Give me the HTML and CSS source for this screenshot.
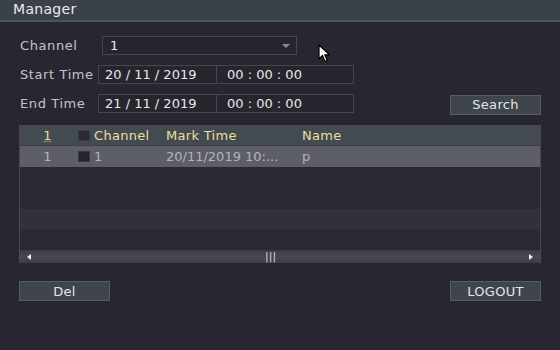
FILE: index.html
```html
<!DOCTYPE html>
<html lang="en">
<head>
  <meta charset="UTF-8" />
  <title>Manager</title>
  <link rel="stylesheet" href="styles.css">
</head>
<body>
  <header class="titlebar">Manager</header>

  <main class="panel">
    <div class="form-row">
      <label class="label">Channel</label>
      <div class="select">
        <span>1</span>
        <span class="caret"></span>
      </div>
    </div>

    <div class="form-row">
      <label class="label">Start Time</label>
      <div class="field date">20 / 11 / 2019</div>
      <div class="field time">00 : 00 : 00</div>
    </div>

    <div class="form-row">
      <label class="label">End Time</label>
      <div class="field date">21 / 11 / 2019</div>
      <div class="field time">00 : 00 : 00</div>
      <button class="btn push-right">Search</button>
    </div>

    <section class="table">
      <div class="row head">
        <span class="c-no"><u>1</u></span>
        <span class="c-box"><i class="check"></i></span>
        <span class="c-chan">Channel</span>
        <span class="c-time">Mark Time</span>
        <span class="c-name">Name</span>
      </div>
      <div class="row selected">
        <span class="c-no">1</span>
        <span class="c-box"><i class="check"></i></span>
        <span class="c-chan">1</span>
        <span class="c-time">20/11/2019 10:...</span>
        <span class="c-name">p</span>
      </div>
      <div class="row"></div>
      <div class="row"></div>
      <div class="row alt"></div>
      <div class="row short"></div>

      <div class="scrollbar">
        <span class="arrow left"></span>
        <span class="grip">|||</span>
        <span class="arrow right"></span>
      </div>
    </section>

    <div class="actions">
      <button class="btn">Del</button>
      <button class="btn">LOGOUT</button>
    </div>
  </main>

  <svg class="cursor" width="13" height="20" viewBox="0 0 13 20">
    <path d="M1 1 L1 15 L4.5 11.5 L7 17.5 L9.2 16.6 L6.8 10.8 L11.5 10.8 Z" fill="#fff" stroke="#000" stroke-width="1.2" stroke-linejoin="round"/>
  </svg>
</body>
</html>
```

FILE: styles.css
```css
body {
  margin: 0;
  width: 560px;
  height: 350px;
  overflow: hidden;
  background: #282731;
  color: #c9c9cc;
  font-family: "DejaVu Sans", sans-serif;
  font-size: 13px;
}
.titlebar {
  height: 20px;
  line-height: 18px;
  padding-left: 13px;
  background: #3b4149;
  border-bottom: 2px solid #4d535b;
  color: #eaeaea;
  font-size: 14px;
  letter-spacing: 0.3px;
}
.panel {
  padding: 14px 19px 0 19px;
}
.form-row {
  display: flex;
  align-items: center;
  height: 19px;
  margin-bottom: 10px;
}
.label {
  width: 78px;
  padding-left: 1px;
  color: #c4c4c8;
  letter-spacing: 0.6px;
  white-space: nowrap;
}
.select {
  display: flex;
  align-items: center;
  justify-content: space-between;
  width: 180px;
  height: 17px;
  margin-left: 4px;
  padding: 0 6px 0 7px;
  background: #27262f;
  border: 1px solid #45464e;
  color: #e8e8e8;
}
.caret {
  width: 0;
  height: 0;
  border-left: 4px solid transparent;
  border-right: 4px solid transparent;
  border-top: 4px solid #8a8b92;
}
.field {
  height: 17px;
  line-height: 17px;
  background: #27262f;
  border: 1px solid #45464e;
  color: #e8e8e8;
}
.date {
  width: 111px;
  padding-left: 6px;
}
.time {
  width: 126px;
  padding-left: 10px;
  border-left: none;
}
.btn {
  width: 91px;
  height: 20px;
  padding: 0;
  background: #3f454d;
  border: 1px solid #575c63;
  color: #e6e6e6;
  font-family: "DejaVu Sans", sans-serif;
  font-size: 13px;
  letter-spacing: 0.3px;
}
.push-right {
  margin-left: auto;
  margin-top: 2px;
}
.table {
  margin-top: 12px;
  border-left: 1px solid #4a4a52;
  border-right: 1px solid #4a4a52;
  background: #2a2933;
}
.row {
  display: flex;
  align-items: center;
  height: 21px;
}
.row.alt {
  background: #32313b;
}
.row.short {
  height: 20px;
}
.head {
  background: #434a50;
  color: #ecdf9f;
  border-bottom: 1px solid #3a3f45;
  height: 20px;
  letter-spacing: 0.3px;
}
.head u {
  text-decoration-color: #8a8460;
}
.selected {
  background: #5d5e67;
  color: #b3b3b8;
}
.c-no {
  width: 55px;
  text-align: center;
}
.c-box {
  width: 16px;
  padding-left: 3px;
}
.check {
  display: block;
  width: 12px;
  height: 11px;
  background: #26252e;
  border: 1px solid #3a3940;
  box-sizing: border-box;
}
.head .check {
  background: #2d2a38;
}
.c-chan {
  width: 72px;
}
.c-time {
  width: 136px;
}
.scrollbar {
  display: flex;
  align-items: center;
  height: 13px;
  padding: 0 7px;
  background: linear-gradient(#393b43, #474950 50%, #3b3d45);
}
.arrow {
  width: 0;
  height: 0;
  border-top: 3px solid transparent;
  border-bottom: 3px solid transparent;
}
.arrow.left {
  border-right: 4px solid #f0f0f0;
}
.arrow.right {
  margin-left: auto;
  border-left: 4px solid #f0f0f0;
}
.grip {
  margin-left: 234px;
  color: #d4d4d8;
  font-size: 11px;
  letter-spacing: 0;
}
.actions {
  display: flex;
  justify-content: space-between;
  margin-top: 18px;
}
.cursor {
  position: absolute;
  left: 318px;
  top: 44px;
}
```
